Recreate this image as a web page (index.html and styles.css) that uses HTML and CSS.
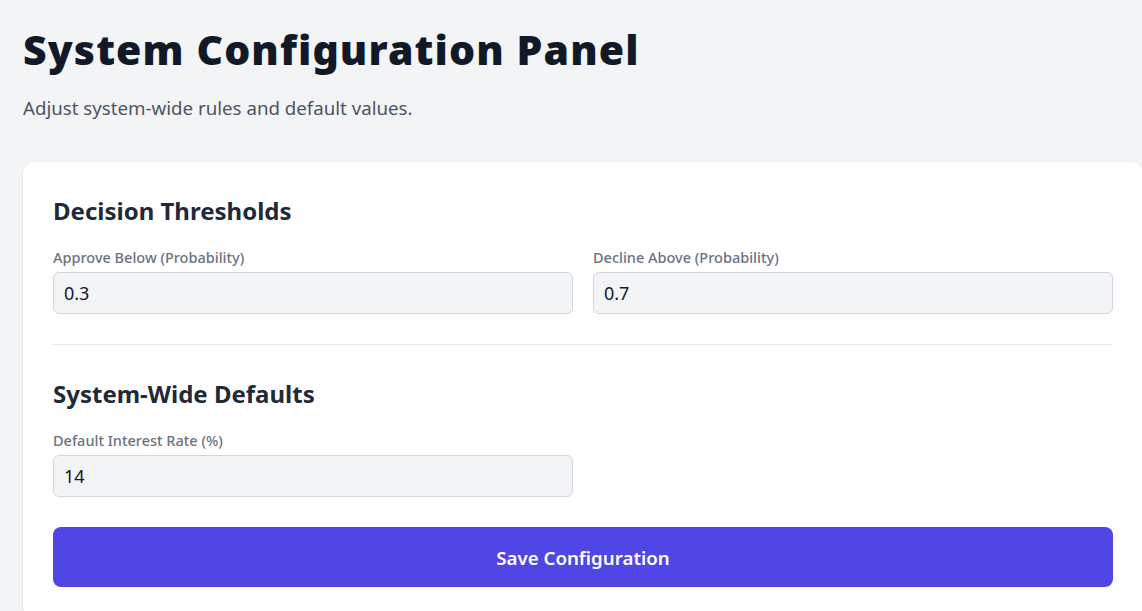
FILE: index.html
```html
<!DOCTYPE html>
<html lang="en">
<head>
<meta charset="utf-8">
<title>System Configuration Panel</title>
<link rel="stylesheet" href="styles.css">
</head>
<body>
<main class="page">
  <header class="page-header">
    <h1 class="page-title">System Configuration Panel</h1>
    <p class="page-subtitle">Adjust system-wide rules and default values.</p>
  </header>
  <section class="card">
    <div class="section">
      <h2 class="section-title">Decision Thresholds</h2>
      <div class="grid">
        <label class="field">
          <span class="field-label">Approve Below (Probability)</span>
          <input class="field-input" type="text" value="0.3">
        </label>
        <label class="field">
          <span class="field-label">Decline Above (Probability)</span>
          <input class="field-input" type="text" value="0.7">
        </label>
      </div>
    </div>
    <hr class="divider">
    <div class="section">
      <h2 class="section-title">System-Wide Defaults</h2>
      <div class="grid">
        <label class="field">
          <span class="field-label">Default Interest Rate (%)</span>
          <input class="field-input" type="text" value="14">
        </label>
      </div>
    </div>
    <button class="save-btn" type="button">Save Configuration</button>
  </section>
</main>
</body>
</html>
```

FILE: styles.css
```css
* { box-sizing: border-box; }
html, body { margin: 0; padding: 0; }
body {
  background: #f3f4f6;
  font-family: "Noto Sans", "Open Sans", sans-serif;
  color: #111827;
  overflow: hidden;
}
.page {
  padding: 24px 0 0 23px;
  width: 1143px;
}
.page-header { margin-bottom: 40px; }
.page-title {
  margin: 0;
  font-size: 41px;
  line-height: 50px;
  font-weight: 900;
  color: #111827;
  letter-spacing: 1.1px;
}
.page-subtitle {
  margin: 20px 0 0 0;
  font-size: 18.7px;
  line-height: 28px;
  color: #4b5563;
}
.card {
  background: #fff;
  border-radius: 12px;
  box-shadow: 0 1px 3px rgba(0,0,0,0.08), 0 1px 2px rgba(0,0,0,0.05);
  padding: 32px 30px 32px 30px;
  width: 1120px;
}
.section-title {
  margin: 0 0 19px 0;
  font-size: 24px;
  line-height: 34px;
  font-weight: 700;
  color: #1f2937;
}
.grid {
  display: grid;
  grid-template-columns: 1fr 1fr;
  gap: 20px;
}
.field { display: flex; flex-direction: column; }
.field-label {
  font-size: 14.5px;
  line-height: 20px;
  font-weight: 500;
  color: #6b7280;
  margin-bottom: 5px;
}
.field-input {
  height: 42px;
  border: 1px solid #d1d5db;
  border-radius: 6px;
  background: #f3f4f6;
  padding: 0 10px;
  font-family: inherit;
  font-size: 18px;
  color: #111827;
  outline: none;
}
.divider {
  border: 0;
  border-top: 1px solid #e5e7eb;
  margin: 30px 0 32px 0;
}
.save-btn {
  display: block;
  width: 100%;
  height: 60px;
  margin-top: 30px;
  border: 0;
  border-radius: 8px;
  background: #4f46e5;
  color: #fff;
  font-family: inherit;
  font-size: 18.7px;
  font-weight: 600;
}
```
